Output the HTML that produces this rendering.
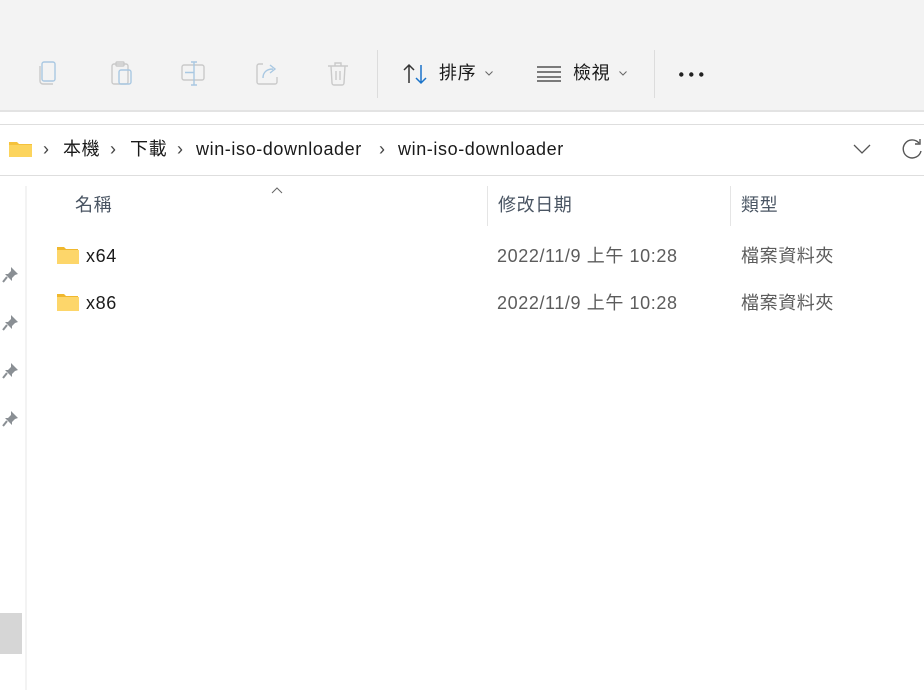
<!DOCTYPE html>
<html><head><meta charset="utf-8"><style>
*{margin:0;padding:0;box-sizing:border-box}
body{width:924px;height:690px;overflow:hidden;background:#fff;font-family:"Liberation Sans","Noto Sans CJK TC",sans-serif;position:relative;color:#1a1a1a}
.a{position:absolute}
.tb{left:0;top:0;width:924px;height:112px;background:#f3f3f3;border-bottom:2px solid #e3e3e3}
.t{font-size:18px;line-height:22px;white-space:nowrap;letter-spacing:0.6px}
.g{color:#5c5c5c}
svg{position:absolute;overflow:visible}
</style></head><body>
<div class="a tb"></div>
<svg style="left:38px;top:60px" width="24" height="26" fill="none" stroke="#a9c8e2" stroke-width="1.4"><rect x="4" y="2" width="13" height="19" rx="2"/><path d="M2 6v15a3 3 0 0 0 3 3h10" stroke="#c9c9c9"/></svg>
<svg style="left:110px;top:60px" width="24" height="26" fill="none" stroke="#c9c9c9" stroke-width="1.4"><rect x="2" y="4" width="16" height="20" rx="2"/><rect x="6" y="2" width="8" height="4" rx="1"/><rect x="9" y="10" width="12" height="14" rx="2" stroke="#a9c8e2"/></svg>
<svg style="left:181px;top:60px" width="26" height="26" fill="none" stroke-width="1.4"><rect x="1" y="5" width="22" height="15" rx="2" stroke="#c9c9c9"/><path d="M13 2v23M10 2h6M10 25h6M4 12.5h9" stroke="#a9c8e2"/></svg>
<svg style="left:255px;top:62px" width="24" height="24" fill="none" stroke-width="1.4"><path d="M8 2H4a2 2 0 0 0-2 2v16a2 2 0 0 0 2 2h16a2 2 0 0 0 2-2v-5" stroke="#c9c9c9"/><path d="M8 16c0-6 4-9 10-9M15 3l5 4-5 4" stroke="#a9c8e2"/></svg>
<svg style="left:327px;top:61px" width="22" height="25" fill="none" stroke="#c9c9c9" stroke-width="1.4"><path d="M1 5h20M8 5V2h6v3M4 5l1 17a2 2 0 0 0 2 2h8a2 2 0 0 0 2-2l1-17M9 10v9M13 10v9"/></svg>
<div class="a" style="left:377px;top:50px;width:1px;height:48px;background:#dcdcdc"></div>
<svg style="left:403px;top:63px" width="26" height="22" fill="none" stroke-width="1.5"><path d="M6 20V2M1 7l5-5 5 5" stroke="#333"/><path d="M18 2v18M13 15l5 5 5-5" stroke="#1a73c9"/></svg>
<div class="a t" style="left:439px;top:62px">排序</div>
<svg style="left:485px;top:71px" width="8" height="5" fill="none" stroke="#666"><path d="M0.5 0.5l3.5 3.5 3.5-3.5"/></svg>
<svg style="left:537px;top:66px" width="24" height="16" fill="none" stroke="#333" stroke-width="1.3"><path d="M0 1h24M0 6h24M0 11h24M0 15h24" stroke-width="1.2"/></svg>
<div class="a t" style="left:573px;top:62px">檢視</div>
<svg style="left:619px;top:71px" width="8" height="5" fill="none" stroke="#666"><path d="M0.5 0.5l3.5 3.5 3.5-3.5"/></svg>
<div class="a" style="left:654px;top:50px;width:1px;height:48px;background:#dcdcdc"></div>
<svg style="left:679px;top:72px" width="26" height="5" fill="#222"><circle cx="2.3" cy="2.5" r="2.2"/><circle cx="12.3" cy="2.5" r="2.2"/><circle cx="22.3" cy="2.5" r="2.2"/></svg>
<div class="a" style="left:0;top:124px;width:924px;height:1px;background:#dedede"></div>
<div class="a" style="left:0;top:175px;width:924px;height:1px;background:#dedede"></div>
<svg style="left:9px;top:140px" width="24" height="18"><path d="M0 2h8l2 2h13v13H0z" fill="#f5c23c"/><rect x="0" y="5" width="23" height="12" fill="#fcd45d"/></svg>
<div class="a t" style="left:43px;top:138px;color:#444">›</div>
<div class="a t" style="left:63px;top:138px">本機</div>
<div class="a t" style="left:110px;top:138px;color:#444">›</div>
<div class="a t" style="left:130px;top:138px">下載</div>
<div class="a t" style="left:177px;top:138px;color:#444">›</div>
<div class="a t" style="left:196px;top:138px">win-iso-downloader</div>
<div class="a t" style="left:379px;top:138px;color:#444">›</div>
<div class="a t" style="left:398px;top:138px">win-iso-downloader</div>
<svg style="left:853px;top:144px" width="18" height="10" fill="none" stroke="#555" stroke-width="1.3"><path d="M1 1l8 8 8-8"/></svg>
<svg style="left:902px;top:139px" width="22" height="20" fill="none" stroke="#555" stroke-width="1.4"><path d="M17 4A9 9 0 1 0 19 12"/><path d="M18 0v5h-5"/></svg>
<div class="a" style="left:25px;top:186px;width:2px;height:504px;background:#f3f3f3"></div>
<div class="a" style="left:0;top:613px;width:22px;height:41px;background:#d6d6d6"></div>
<svg style="left:2px;top:266px" width="18" height="170" fill="#8a8f94"><g id="p"><path d="M9 1l7 7-3 1-3 3 0 3-7-7 3 0 3-3z"/><path d="M5 11l-4 5" stroke="#8a8f94" stroke-width="2"/></g><use href="#p" y="48"/><use href="#p" y="96"/><use href="#p" y="144"/></svg>
<div class="a t" style="left:75px;top:194px;color:#4a5563">名稱</div>
<svg style="left:271px;top:187px" width="12" height="7" fill="none" stroke="#666"><path d="M1 6l5-5 5 5"/></svg>
<div class="a" style="left:487px;top:186px;width:1px;height:40px;background:#e5e5e5"></div>
<div class="a t" style="left:498px;top:194px;color:#4a5563">修改日期</div>
<div class="a" style="left:730px;top:186px;width:1px;height:40px;background:#e5e5e5"></div>
<div class="a t" style="left:741px;top:194px;color:#4a5563">類型</div>
<svg style="left:57px;top:247px" width="22" height="18"><path d="M0 0h7l2 2h12v15H0z" fill="#f0b82e"/><rect x="0" y="3" width="22" height="14" fill="#fdd66a"/></svg>
<div class="a t" style="left:86px;top:245px">x64</div>
<div class="a t g" style="left:497px;top:245px">2022/11/9 上午 10:28</div>
<div class="a t g" style="left:741px;top:245px">檔案資料夾</div>
<svg style="left:57px;top:294px" width="22" height="18"><path d="M0 0h7l2 2h12v15H0z" fill="#f0b82e"/><rect x="0" y="3" width="22" height="14" fill="#fdd66a"/></svg>
<div class="a t" style="left:86px;top:292px">x86</div>
<div class="a t g" style="left:497px;top:292px">2022/11/9 上午 10:28</div>
<div class="a t g" style="left:741px;top:292px">檔案資料夾</div>
</body></html>
